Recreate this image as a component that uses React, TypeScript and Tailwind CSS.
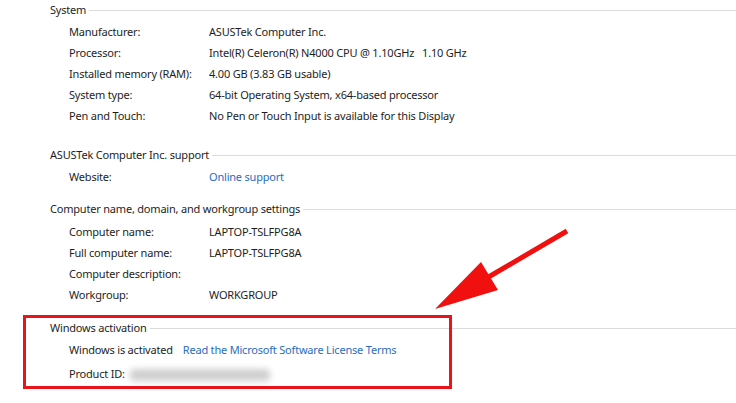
const rowsSystem = [
  ["Manufacturer:", "ASUSTek Computer Inc."],
  ["Processor:", "Intel(R) Celeron(R) N4000 CPU @ 1.10GHz   1.10 GHz"],
  ["Installed memory (RAM):", "4.00 GB (3.83 GB usable)"],
  ["System type:", "64-bit Operating System, x64-based processor"],
  ["Pen and Touch:", "No Pen or Touch Input is available for this Display"],
];

const rowsComputer = [
  ["Computer name:", "LAPTOP-TSLFPG8A"],
  ["Full computer name:", "LAPTOP-TSLFPG8A"],
  ["Computer description:", ""],
  ["Workgroup:", "WORKGROUP"],
];

function Header({ title, className = "" }: { title: string; className?: string }) {
  return (
    <div className={"flex h-5 items-center pl-[50px] " + className}>
      <span className="whitespace-nowrap">{title}</span>
      <div className="ml-[3px] h-px flex-1 bg-[#dcdcdc]" />
    </div>
  );
}

function Row({ label, value, link, className = "" }: { label: string; value: React.ReactNode; link?: boolean; className?: string }) {
  return (
    <div className={"flex h-[21px] items-center pl-[69px] " + className}>
      <span className="w-[140px] shrink-0 whitespace-pre">{label}</span>
      <span className={"whitespace-pre " + (link ? "text-[#2a6cc0]" : "")}>{value}</span>
    </div>
  );
}

export default function App() {
  return (
    <div className="relative h-[403px] w-[736px] overflow-hidden bg-white text-[11px] tracking-[-0.2px] text-[#1e1e1e] [font-family:'Noto_Sans',sans-serif]">
      <Header title="System" />
      {rowsSystem.map(([l, v], i) => (
        <Row key={l} label={l} value={v} className={i === 0 ? "mt-[2px]" : ""} />
      ))}

      <Header title="ASUSTek Computer Inc. support" className="mt-[18px]" />
      <Row label="Website:" value="Online support" link className="mt-[2px]" />

      <Header title="Computer name, domain, and workgroup settings" className="mt-[11px]" />
      {rowsComputer.map(([l, v], i) => (
        <Row key={l} label={l} value={v} className={i === 0 ? "mt-[3px] h-[21px]" : "h-[21px]"} />
      ))}

      <Header title="Windows activation" className="mt-[12px]" />
      <div className="mt-[2px] flex h-[21px] items-center pl-[69px]">
        <span className="whitespace-nowrap">Windows is activated</span>
        <span className="ml-[10px] whitespace-nowrap text-[#2a6cc0]">Read the Microsoft Software License Terms</span>
      </div>
      <div className="mt-[3px] flex h-[21px] items-center pl-[69px]">
        <span className="whitespace-nowrap">Product ID:</span>
        <div className="ml-[5px] h-[12px] w-[140px] rounded-sm bg-[#cfcfcf] blur-[3px]" />
      </div>

      {/* annotation */}
      <div className="absolute left-[23px] top-[315px] h-[74px] w-[429px] border-[3px] border-[#e8141a]" />
      <svg className="absolute left-0 top-0" width="736" height="403" viewBox="0 0 736 403">
        <line x1="567" y1="231" x2="480" y2="282" stroke="#f01010" strokeWidth="5" />
        <polygon points="435,309 481,262 498,290" fill="#f01010" />
      </svg>
    </div>
  );
}
